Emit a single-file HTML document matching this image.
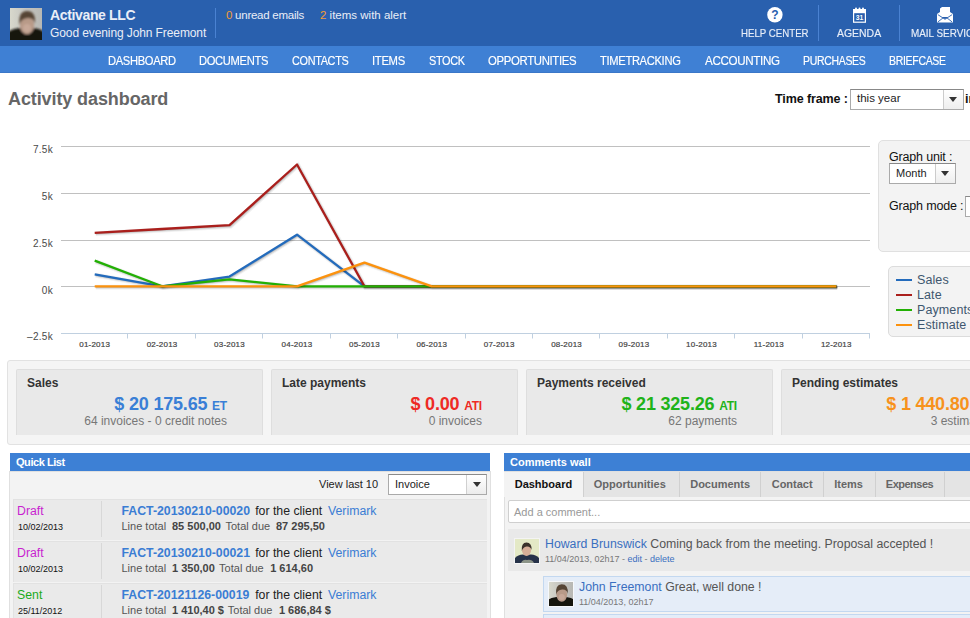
<!DOCTYPE html>
<html><head><meta charset="utf-8">
<style>
*{margin:0;padding:0;box-sizing:border-box}
html,body{width:970px;height:618px;overflow:hidden;background:#fff;font-family:"Liberation Sans",sans-serif;color:#333}
.a{position:absolute;white-space:nowrap}
#hdr{position:absolute;left:0;top:0;width:970px;height:46px;background:#2960ae}
#nav{position:absolute;left:0;top:46px;width:970px;height:27px;background:#3f80d4;border-bottom:1px solid #3a77c8}
.nv{position:absolute;top:54px;color:#fff;-webkit-text-stroke:0.15px #fff;transform-origin:0 0;font-size:12px;letter-spacing:-0.35px}
.hi{position:absolute;white-space:nowrap;color:#e8eef8;font-size:11px;top:27px;transform-origin:0 0;-webkit-text-stroke:0.15px #e8eef8}
.sep{position:absolute;width:1px;background:#4a82d2}

.bx{position:absolute;top:369px;width:247px;height:66px;background:#e9e9e9;border:1px solid #dedede;border-bottom:none;border-radius:2px 2px 0 0;white-space:nowrap}
.bt{position:absolute;left:10px;top:6px;font-size:12px;font-weight:bold;color:#333}
.bv{position:absolute;right:35px;top:24px;font-size:18px;font-weight:bold;letter-spacing:-0.2px}
.bv small{font-size:12px}
.bs{position:absolute;right:35px;top:44px;font-size:12px;color:#777}

.ph{position:absolute;top:453px;height:18px;background:#3d80d5;color:#fff;font-size:11px;font-weight:bold;padding:3px 0 0 6px;white-space:nowrap}
.sel{position:absolute;border:1px solid #aaa;border-top-color:#8a8a8a;background:#fff}
.sel .ar{position:absolute;top:0;right:0;width:20px;height:100%;border-left:1px solid #d0d0d0;background:linear-gradient(#fff,#ececec)}
.sel .ar:after{content:"";position:absolute;left:6px;top:7px;border-left:4px solid transparent;border-right:4px solid transparent;border-top:5px solid #333}
.row{position:absolute;left:13px;width:474px;height:41px;background:#eaeaea;border-top:1px solid #e2e2e2;border-left:1px solid #e2e2e2}
.row .st{position:absolute;left:3px;top:4px;font-size:12.3px}
.row .dt{position:absolute;left:4px;top:22px;font-size:9px;color:#111}
.row .dv{position:absolute;left:87px;top:1px;width:1px;height:36px;background:#d8d8d8}
.row .l1{position:absolute;left:108px;top:5px;font-size:12.3px;color:#222;white-space:nowrap}
.row .l1 b{color:#3a7dd4;letter-spacing:0.1px}
.row .l1 i{font-style:normal;color:#3a7dd4}
.row .l2{position:absolute;left:108px;top:21px;font-size:11px;color:#555;white-space:nowrap}
.row .l2 b{color:#444}
.tab{position:absolute;top:472px;height:25px;background:#e4e4e4;border-left:1px solid #d0d0d0;font-size:11px;font-weight:bold;color:#666;padding:6px 0 0 0;white-space:nowrap}

.f1,.f2,.f3,.g1,.g2{position:absolute;white-space:nowrap}
.f1{top:4px;font-size:12.3px;font-weight:bold;color:#3a7dd4}
.f2{top:4px;font-size:12.3px;color:#222}
.f3{top:4px;font-size:12.3px;color:#3a7dd4}
.g1{top:20px;font-size:11px;color:#555}
.g2{top:20px;font-size:11px;font-weight:bold;color:#444}
</style></head><body>
<div id="hdr"></div>
<div id="nav"></div>
<!-- avatar -->
<svg class="a" style="left:10px;top:8px" width="32" height="32">
 <defs><filter id="bl1" x="-20%" y="-20%" width="140%" height="140%"><feGaussianBlur stdDeviation="0.9"/></filter>
 <linearGradient id="bgg" x1="0" x2="1"><stop offset="0" stop-color="#d8d8cc"/><stop offset="0.5" stop-color="#c4c4c0"/><stop offset="1" stop-color="#b8b8b4"/></linearGradient></defs>
 <rect width="32" height="32" fill="url(#bgg)"/>
 <g filter="url(#bl1)">
  <path d="M-2 34 V24 Q3 20.5 10 20 L23 20 Q30 20.5 34 24 V34 Z" fill="#141210"/>
  <ellipse cx="17" cy="17" rx="7.2" ry="9.2" fill="#b89a88"/>
  <ellipse cx="17" cy="20" rx="4" ry="4" fill="#c7a898"/>
  <path d="M9.5 17 Q8 3 17 3 Q26 3 25 16 Q24 9.5 17.5 10 Q11 10.5 9.5 17 Z" fill="#574535"/>
 </g>
</svg>
<div class="a" style="left:50px;top:7px;font-size:14px;font-weight:bold;color:#e9eef7;letter-spacing:-0.35px">Activane LLC</div>
<div class="a" style="left:50px;top:26px;font-size:12px;color:#e9eef7;letter-spacing:-0.1px">Good evening John Freemont</div>
<div class="sep" style="left:215px;top:8px;height:30px"></div>
<div class="a" style="left:226px;top:9px;font-size:11.5px;letter-spacing:-0.25px;color:#e9eef7"><span style="color:#f39c34">0</span> unread emails</div>
<div class="a" style="left:320px;top:9px;font-size:11.5px;color:#e9eef7"><span style="color:#f39c34">2</span> items with alert</div>
<div class="sep" style="left:818px;top:5px;height:36px"></div>
<div class="sep" style="left:899px;top:5px;height:36px"></div>
<div class="hi" style="left:741px;transform:scaleX(0.88)">HELP CENTER</div>
<div class="hi" style="left:837px;transform:scaleX(0.95)">AGENDA</div>
<div class="hi" style="left:911px;transform:scaleX(0.9)">MAIL SERVICE</div>

<div class="nv" style="left:108px;transform:scaleX(0.931)">DASHBOARD</div>
<div class="nv" style="left:199px;transform:scaleX(0.932)">DOCUMENTS</div>
<div class="nv" style="left:292px;transform:scaleX(0.905)">CONTACTS</div>
<div class="nv" style="left:372px;transform:scaleX(0.941)">ITEMS</div>
<div class="nv" style="left:429px;transform:scaleX(0.910)">STOCK</div>
<div class="nv" style="left:488px;transform:scaleX(0.947)">OPPORTUNITIES</div>
<div class="nv" style="left:600px;transform:scaleX(0.931)">TIMETRACKING</div>
<div class="nv" style="left:705px;transform:scaleX(0.968)">ACCOUNTING</div>
<div class="nv" style="left:803px;transform:scaleX(0.873)">PURCHASES</div>
<div class="nv" style="left:889px;transform:scaleX(0.875)">BRIEFCASE</div>


<!-- title -->
<div class="a" style="left:8px;top:89px;font-size:18px;font-weight:bold;color:#666;letter-spacing:-0.1px">Activity dashboard</div>
<div class="a" style="left:775px;top:92px;font-size:12.5px;font-weight:bold;color:#111;letter-spacing:-0.1px">Time frame :</div>
<div class="a" style="left:850px;top:89px;width:114px;height:21px;border:1px solid #aaa;border-top-color:#888;background:#fff">
  <div class="a" style="left:6px;top:2px;font-size:11.5px;color:#222">this year</div>
  <div class="a" style="left:92px;top:0;width:20px;height:19px;border-left:1px solid #ccc;background:linear-gradient(#fff,#eee)"></div>
  <div class="a" style="left:98px;top:7px;width:0;height:0;border-left:4px solid transparent;border-right:4px solid transparent;border-top:5px solid #333"></div>
</div>
<div class="a" style="left:965px;top:92px;font-size:12.5px;font-weight:bold;color:#111">in</div>
<!--CHART--><svg class="a" style="left:0;top:0" width="970" height="618">
<path d="M61 146.5H870" stroke="#c0c0c0" stroke-width="1"/>
<path d="M61 193.5H870" stroke="#c0c0c0" stroke-width="1"/>
<path d="M61 240.5H870" stroke="#c0c0c0" stroke-width="1"/>
<path d="M61 286.5H870" stroke="#c0c0c0" stroke-width="1"/>
<path d="M61 333.5H870" stroke="#c0d0e0" stroke-width="1"/>
<path d="M127.5 333.5V338.5" stroke="#c0d0e0" stroke-width="1"/>
<path d="M195.5 333.5V338.5" stroke="#c0d0e0" stroke-width="1"/>
<path d="M262.5 333.5V338.5" stroke="#c0d0e0" stroke-width="1"/>
<path d="M330.5 333.5V338.5" stroke="#c0d0e0" stroke-width="1"/>
<path d="M397.5 333.5V338.5" stroke="#c0d0e0" stroke-width="1"/>
<path d="M465.5 333.5V338.5" stroke="#c0d0e0" stroke-width="1"/>
<path d="M532.5 333.5V338.5" stroke="#c0d0e0" stroke-width="1"/>
<path d="M599.5 333.5V338.5" stroke="#c0d0e0" stroke-width="1"/>
<path d="M667.5 333.5V338.5" stroke="#c0d0e0" stroke-width="1"/>
<path d="M734.5 333.5V338.5" stroke="#c0d0e0" stroke-width="1"/>
<path d="M802.5 333.5V338.5" stroke="#c0d0e0" stroke-width="1"/>
<path d="M869.5 333.5V338.5" stroke="#c0d0e0" stroke-width="1"/>
<text x="53" y="153.2" text-anchor="end" font-family="Liberation Sans" font-size="10" fill="#4a4a4a" letter-spacing="0.3">7.5k</text>
<text x="53" y="200.0" text-anchor="end" font-family="Liberation Sans" font-size="10" fill="#4a4a4a" letter-spacing="0.3">5k</text>
<text x="53" y="246.8" text-anchor="end" font-family="Liberation Sans" font-size="10" fill="#4a4a4a" letter-spacing="0.3">2.5k</text>
<text x="53" y="293.5" text-anchor="end" font-family="Liberation Sans" font-size="10" fill="#4a4a4a" letter-spacing="0.3">0k</text>
<text x="53" y="340.2" text-anchor="end" font-family="Liberation Sans" font-size="10" fill="#4a4a4a" letter-spacing="0.3">&#8211;2.5k</text>
<text x="94.7" y="346.5" text-anchor="middle" font-family="Liberation Sans" font-size="8" fill="#444" stroke="#444" stroke-width="0.2" letter-spacing="0.2">01-2013</text>
<text x="162.1" y="346.5" text-anchor="middle" font-family="Liberation Sans" font-size="8" fill="#444" stroke="#444" stroke-width="0.2" letter-spacing="0.2">02-2013</text>
<text x="229.5" y="346.5" text-anchor="middle" font-family="Liberation Sans" font-size="8" fill="#444" stroke="#444" stroke-width="0.2" letter-spacing="0.2">03-2013</text>
<text x="297.0" y="346.5" text-anchor="middle" font-family="Liberation Sans" font-size="8" fill="#444" stroke="#444" stroke-width="0.2" letter-spacing="0.2">04-2013</text>
<text x="364.4" y="346.5" text-anchor="middle" font-family="Liberation Sans" font-size="8" fill="#444" stroke="#444" stroke-width="0.2" letter-spacing="0.2">05-2013</text>
<text x="431.8" y="346.5" text-anchor="middle" font-family="Liberation Sans" font-size="8" fill="#444" stroke="#444" stroke-width="0.2" letter-spacing="0.2">06-2013</text>
<text x="499.2" y="346.5" text-anchor="middle" font-family="Liberation Sans" font-size="8" fill="#444" stroke="#444" stroke-width="0.2" letter-spacing="0.2">07-2013</text>
<text x="566.6" y="346.5" text-anchor="middle" font-family="Liberation Sans" font-size="8" fill="#444" stroke="#444" stroke-width="0.2" letter-spacing="0.2">08-2013</text>
<text x="634.0" y="346.5" text-anchor="middle" font-family="Liberation Sans" font-size="8" fill="#444" stroke="#444" stroke-width="0.2" letter-spacing="0.2">09-2013</text>
<text x="701.5" y="346.5" text-anchor="middle" font-family="Liberation Sans" font-size="8" fill="#444" stroke="#444" stroke-width="0.2" letter-spacing="0.2">10-2013</text>
<text x="768.9" y="346.5" text-anchor="middle" font-family="Liberation Sans" font-size="8" fill="#444" stroke="#444" stroke-width="0.2" letter-spacing="0.2">11-2013</text>
<text x="836.3" y="346.5" text-anchor="middle" font-family="Liberation Sans" font-size="8" fill="#444" stroke="#444" stroke-width="0.2" letter-spacing="0.2">12-2013</text>
<g transform="translate(1,1)"><path d="M94.7 274.3 L162.1 286.3 L229.5 276.6 L297.0 234.7 L364.4 286.3 L431.8 286.3 L499.2 286.3 L566.6 286.3 L634.0 286.3 L701.5 286.3 L768.9 286.3 L836.3 286.3" fill="none" stroke="#000" stroke-opacity="0.05" stroke-width="5"/><path d="M94.7 274.3 L162.1 286.3 L229.5 276.6 L297.0 234.7 L364.4 286.3 L431.8 286.3 L499.2 286.3 L566.6 286.3 L634.0 286.3 L701.5 286.3 L768.9 286.3 L836.3 286.3" fill="none" stroke="#000" stroke-opacity="0.1" stroke-width="3"/><path d="M94.7 274.3 L162.1 286.3 L229.5 276.6 L297.0 234.7 L364.4 286.3 L431.8 286.3 L499.2 286.3 L566.6 286.3 L634.0 286.3 L701.5 286.3 L768.9 286.3 L836.3 286.3" fill="none" stroke="#000" stroke-opacity="0.15" stroke-width="1"/></g>
<path d="M94.7 274.3 L162.1 286.3 L229.5 276.6 L297.0 234.7 L364.4 286.3 L431.8 286.3 L499.2 286.3 L566.6 286.3 L634.0 286.3 L701.5 286.3 L768.9 286.3 L836.3 286.3" fill="none" stroke="#236bbc" stroke-width="2.3" stroke-linejoin="round" stroke-linecap="butt"/>
<g transform="translate(1,1)"><path d="M94.7 232.8 L162.1 229.0 L229.5 225.2 L297.0 164.5 L364.4 286.3 L431.8 286.3 L499.2 286.3 L566.6 286.3 L634.0 286.3 L701.5 286.3 L768.9 286.3 L836.3 286.3" fill="none" stroke="#000" stroke-opacity="0.05" stroke-width="5"/><path d="M94.7 232.8 L162.1 229.0 L229.5 225.2 L297.0 164.5 L364.4 286.3 L431.8 286.3 L499.2 286.3 L566.6 286.3 L634.0 286.3 L701.5 286.3 L768.9 286.3 L836.3 286.3" fill="none" stroke="#000" stroke-opacity="0.1" stroke-width="3"/><path d="M94.7 232.8 L162.1 229.0 L229.5 225.2 L297.0 164.5 L364.4 286.3 L431.8 286.3 L499.2 286.3 L566.6 286.3 L634.0 286.3 L701.5 286.3 L768.9 286.3 L836.3 286.3" fill="none" stroke="#000" stroke-opacity="0.15" stroke-width="1"/></g>
<path d="M94.7 232.8 L162.1 229.0 L229.5 225.2 L297.0 164.5 L364.4 286.3 L431.8 286.3 L499.2 286.3 L566.6 286.3 L634.0 286.3 L701.5 286.3 L768.9 286.3 L836.3 286.3" fill="none" stroke="#aa1f1c" stroke-width="2.3" stroke-linejoin="round" stroke-linecap="butt"/>
<g transform="translate(1,1)"><path d="M94.7 260.6 L162.1 286.3 L229.5 279.3 L297.0 286.3 L364.4 286.3 L431.8 286.3 L499.2 286.3 L566.6 286.3 L634.0 286.3 L701.5 286.3 L768.9 286.3 L836.3 286.3" fill="none" stroke="#000" stroke-opacity="0.05" stroke-width="5"/><path d="M94.7 260.6 L162.1 286.3 L229.5 279.3 L297.0 286.3 L364.4 286.3 L431.8 286.3 L499.2 286.3 L566.6 286.3 L634.0 286.3 L701.5 286.3 L768.9 286.3 L836.3 286.3" fill="none" stroke="#000" stroke-opacity="0.1" stroke-width="3"/><path d="M94.7 260.6 L162.1 286.3 L229.5 279.3 L297.0 286.3 L364.4 286.3 L431.8 286.3 L499.2 286.3 L566.6 286.3 L634.0 286.3 L701.5 286.3 L768.9 286.3 L836.3 286.3" fill="none" stroke="#000" stroke-opacity="0.15" stroke-width="1"/></g>
<path d="M94.7 260.6 L162.1 286.3 L229.5 279.3 L297.0 286.3 L364.4 286.3 L431.8 286.3 L499.2 286.3 L566.6 286.3 L634.0 286.3 L701.5 286.3 L768.9 286.3 L836.3 286.3" fill="none" stroke="#22b004" stroke-width="2.3" stroke-linejoin="round" stroke-linecap="butt"/>
<g transform="translate(1,1)"><path d="M94.7 286.3 L162.1 286.3 L229.5 286.3 L297.0 286.3 L364.4 262.6 L431.8 286.3 L499.2 286.3 L566.6 286.3 L634.0 286.3 L701.5 286.3 L768.9 286.3 L836.3 286.3" fill="none" stroke="#000" stroke-opacity="0.05" stroke-width="5"/><path d="M94.7 286.3 L162.1 286.3 L229.5 286.3 L297.0 286.3 L364.4 262.6 L431.8 286.3 L499.2 286.3 L566.6 286.3 L634.0 286.3 L701.5 286.3 L768.9 286.3 L836.3 286.3" fill="none" stroke="#000" stroke-opacity="0.1" stroke-width="3"/><path d="M94.7 286.3 L162.1 286.3 L229.5 286.3 L297.0 286.3 L364.4 262.6 L431.8 286.3 L499.2 286.3 L566.6 286.3 L634.0 286.3 L701.5 286.3 L768.9 286.3 L836.3 286.3" fill="none" stroke="#000" stroke-opacity="0.15" stroke-width="1"/></g>
<path d="M94.7 286.3 L162.1 286.3 L229.5 286.3 L297.0 286.3 L364.4 262.6 L431.8 286.3 L499.2 286.3 L566.6 286.3 L634.0 286.3 L701.5 286.3 L768.9 286.3 L836.3 286.3" fill="none" stroke="#fc920e" stroke-width="2.3" stroke-linejoin="round" stroke-linecap="butt"/>
</svg><!--/CHART-->

<!-- graph unit box -->
<div class="a" style="left:878px;top:140px;width:110px;height:112px;background:#f3f3f3;border:1px solid #e0e0e0;border-radius:5px"></div>
<div class="a" style="left:889px;top:150px;font-size:12.5px;letter-spacing:-0.17px;color:#111">Graph unit :</div>
<div class="a" style="left:889px;top:163px;width:67px;height:21px;border:1px solid #aaa;border-top-color:#888;background:#fff">
  <div class="a" style="left:6px;top:3px;font-size:11px;color:#222">Month</div>
  <div class="a" style="left:45px;top:0;width:20px;height:19px;border-left:1px solid #ccc;background:linear-gradient(#fff,#eee)"></div>
  <div class="a" style="left:51px;top:7px;width:0;height:0;border-left:4px solid transparent;border-right:4px solid transparent;border-top:5px solid #333"></div>
</div>
<div class="a" style="left:889px;top:199px;font-size:12.5px;letter-spacing:-0.17px;color:#111">Graph mode :</div>
<div class="a" style="left:965px;top:196px;width:20px;height:21px;border:1px solid #aaa;border-top-color:#888;background:#fff"></div>
<!-- legend -->
<div class="a" style="left:888px;top:266px;width:110px;height:71px;background:#f3f3f3;border:1px solid #dcdcdc;border-radius:5px"></div>
<div class="a" style="left:896px;top:279px;width:16px;height:2px;background:#236bbc"></div>
<div class="a" style="left:896px;top:294px;width:16px;height:2px;background:#aa1f1c"></div>
<div class="a" style="left:896px;top:309px;width:16px;height:2px;background:#22b004"></div>
<div class="a" style="left:896px;top:324px;width:16px;height:2px;background:#fc920e"></div>
<div class="a" style="left:917px;top:273px;font-size:12.5px;letter-spacing:0.1px;color:#3e576f;line-height:15px">Sales<br>Late<br>Payments<br>Estimate</div>

<!-- summary -->
<div class="a" style="left:7px;top:360px;width:975px;height:85px;background:#f5f5f5;border:1px solid #e2e2e2;border-radius:3px"></div>
<div class="bx" style="left:16px"><div class="bt">Sales</div><div class="bv" style="color:#3a7fd6">$ 20 175.65 <small>ET</small></div><div class="bs">64 invoices - 0 credit notes</div></div>
<div class="bx" style="left:271px"><div class="bt">Late payments</div><div class="bv" style="color:#ee2a24">$ 0.00 <small>ATI</small></div><div class="bs">0 invoices</div></div>
<div class="bx" style="left:526px"><div class="bt">Payments received</div><div class="bv" style="color:#1fb31a">$ 21 325.26 <small>ATI</small></div><div class="bs">62 payments</div></div>
<div class="bx" style="left:781px"><div class="bt">Pending estimates</div><div class="bv" style="color:#f7921c">$ 1 440.80 <small>ATI</small></div><div class="bs">3 estimates</div></div>

<!-- quick list -->
<div class="a" style="left:9px;top:471px;width:482px;height:160px;background:#f3f3f3;border:1px solid #e0e0e0"></div>
<div class="ph" style="left:10px;width:480px;letter-spacing:-0.45px">Quick List</div>
<div class="a" style="left:319px;top:478px;font-size:11px;color:#222">View last 10</div>
<div class="sel" style="left:388px;top:474px;width:99px;height:21px"><div class="a" style="left:6px;top:3px;font-size:11px;color:#222">Invoice</div><div class="ar"></div></div>

<div class="row" style="top:499px"><div class="st" style="color:#c81fd0">Draft</div><div class="dt">10/02/2013</div><div class="dv"></div><div class="f1" style="left:107.5px">FACT-20130210-00020</div><div class="f2" style="left:241.2px">for the client</div><div class="f3" style="left:314.0px">Verimark</div><div class="g1" style="left:107.5px">Line total</div><div class="g2" style="left:158.0px">85 500,00</div><div class="g1" style="left:211.5px">Total due</div><div class="g2" style="left:262.0px">87 295,50</div></div>
<div class="row" style="top:541px"><div class="st" style="color:#c81fd0">Draft</div><div class="dt">10/02/2013</div><div class="dv"></div><div class="f1" style="left:107.5px">FACT-20130210-00021</div><div class="f2" style="left:241.2px">for the client</div><div class="f3" style="left:314.0px">Verimark</div><div class="g1" style="left:107.5px">Line total</div><div class="g2" style="left:158.0px">1 350,00</div><div class="g1" style="left:205.1px">Total due</div><div class="g2" style="left:256.2px">1 614,60</div></div>
<div class="row" style="top:583px"><div class="st" style="color:#1aaa1a">Sent</div><div class="dt">25/11/2012</div><div class="dv"></div><div class="f1" style="left:107.5px">FACT-20121126-00019</div><div class="f2" style="left:241.2px">for the client</div><div class="f3" style="left:314.0px">Verimark</div><div class="g1" style="left:107.5px">Line total</div><div class="g2" style="left:158.0px">1 410,40 $</div><div class="g1" style="left:213.8px">Total due</div><div class="g2" style="left:264.9px">1 686,84 $</div></div>
<!-- comments wall -->
<div class="a" style="left:504px;top:471px;width:480px;height:160px;background:#f3f3f3;border:1px solid #e0e0e0"></div>
<div class="ph" style="left:504px;width:480px">Comments wall</div>
<div class="a" style="left:584px;top:472px;width:400px;height:25px;background:#e4e4e4"></div>
<div class="tab" style="left:504px;width:80px;background:#f3f3f3;border-left:none;color:#111;padding-left:10.7px">Dashboard</div>
<div class="tab" style="left:583px;width:96px;padding-left:9.7px">Opportunities</div>
<div class="tab" style="left:679px;width:81px;padding-left:10.2px">Documents</div>
<div class="tab" style="left:760px;width:63px;padding-left:10.7px">Contact</div>
<div class="tab" style="left:823px;width:52px;padding-left:10.2px">Items</div>
<div class="tab" style="left:875px;width:69px;padding-left:9.8px;letter-spacing:-0.5px">Expenses</div>
<div class="a" style="left:944px;top:472px;width:1px;height:25px;background:#d0d0d0"></div>
<div class="a" style="left:508px;top:500px;width:480px;height:23px;background:#fff;border:1px solid #cfcfcf;border-radius:2px"></div>
<div class="a" style="left:514px;top:506px;font-size:11px;color:#999">Add a comment...</div>
<div class="a" style="left:508px;top:529px;width:470px;height:42px;background:#e9e9e9"></div>
<div class="a" style="left:543px;top:576px;width:440px;height:36px;background:#e5edf8;border:1px solid #c3d8f0"></div>
<div class="a" style="left:543px;top:614px;width:440px;height:36px;background:#e5edf8;border:1px solid #c3d8f0"></div>
<div class="a" style="left:545px;top:537px;font-size:12.3px;color:#555"><span style="color:#3a6fc0">Howard Brunswick</span> Coming back from the meeting. Proposal accepted !</div>
<div class="a" style="left:545px;top:554px;font-size:9px;color:#777">11/04/2013, 02h17 - <span style="color:#3a6fc0">edit</span> - <span style="color:#3a6fc0">delete</span></div>
<div class="a" style="left:579px;top:580px;font-size:12.3px;color:#555"><span style="color:#3a6fc0">John Freemont</span> Great, well done !</div>
<div class="a" style="left:579px;top:597px;font-size:9px;color:#777">11/04/2013, 02h17</div>

<!-- icons -->
<svg class="a" style="left:760px;top:0" width="210" height="45">
 <circle cx="14.9" cy="14.7" r="7.7" fill="#fff"/>
 <text x="14.9" y="19.2" text-anchor="middle" font-family="Liberation Sans" font-weight="bold" font-size="12" fill="#2960ae">?</text>
 <g transform="translate(93,7)">
  <rect x="0.6" y="2.6" width="11.8" height="12.6" fill="none" stroke="#fff" stroke-width="1.2"/>
  <rect x="0" y="2" width="13" height="4.2" fill="#fff"/>
  <circle cx="3" cy="1.6" r="1" fill="#fff"/><circle cx="6.5" cy="1.6" r="1" fill="#fff"/><circle cx="10" cy="1.6" r="1" fill="#fff"/>
  <text x="6.5" y="13" text-anchor="middle" font-family="Liberation Sans" font-weight="bold" font-size="6.8" fill="#fff">31</text>
 </g>
 <g transform="translate(177,7)">
  <path d="M3 1.5 L5 0 H13 V10 H3 Z" fill="#fff"/>
  <path d="M0 7 L3 5 V9 L8 12 L13 9 V5 L16 7 V15.6 H0 Z" fill="#fff"/>
  <path d="M0.8 15 L6.5 10.5 M15.2 15 L9.5 10.5" stroke="#2960ae" stroke-width="0.9"/>
  <path d="M0.8 7.6 L8 12.3 L15.2 7.6" stroke="#2960ae" stroke-width="0.9" fill="none"/>
 </g>
</svg>
<!-- comment avatars -->
<div class="a" style="left:514px;top:538px;width:26px;height:26px;background:#f4f4f4"></div>
<svg class="a" style="left:515px;top:539px" width="24" height="24">
 <defs><filter id="bl2" x="-20%" y="-20%" width="140%" height="140%"><feGaussianBlur stdDeviation="0.6"/></filter></defs>
 <rect width="24" height="24" fill="#e4e9c6"/>
 <g filter="url(#bl2)">
  <path d="M0 26 V19 Q3 15.5 8 15.5 L16 15.5 Q21 15.5 24 19 V26 Z" fill="#283048"/>
  <path d="M6 24 Q8 20 12 21 Q17 20 19 24 Z" fill="#8c9488"/>
  <ellipse cx="11.5" cy="11" rx="4.6" ry="6" fill="#d7ae98"/>
  <path d="M6.8 12 Q6 3.5 11.5 3.5 Q17 3.5 16.5 11 Q15.5 7 11.5 7.5 Q8 8 6.8 12 Z" fill="#3a302a"/>
 </g>
</svg>
<div class="a" style="left:548px;top:581px;width:26px;height:26px;background:#f6f8fb"></div>
<svg class="a" style="left:549px;top:582px" width="24" height="24" viewBox="0 0 32 32">
 <defs><linearGradient id="bgg2" x1="0" x2="1"><stop offset="0" stop-color="#d8d8cc"/><stop offset="0.5" stop-color="#c4c4c0"/><stop offset="1" stop-color="#b8b8b4"/></linearGradient></defs>
 <rect width="32" height="32" fill="url(#bgg2)"/>
 <g filter="url(#bl1)">
  <path d="M-2 34 V24 Q3 20.5 10 20 L23 20 Q30 20.5 34 24 V34 Z" fill="#141210"/>
  <ellipse cx="17" cy="17" rx="7.2" ry="9.2" fill="#b89a88"/>
  <ellipse cx="17" cy="20" rx="4" ry="4" fill="#c7a898"/>
  <path d="M9.5 17 Q8 3 17 3 Q26 3 25 16 Q24 9.5 17.5 10 Q11 10.5 9.5 17 Z" fill="#574535"/>
 </g>
</svg>
</body></html>
